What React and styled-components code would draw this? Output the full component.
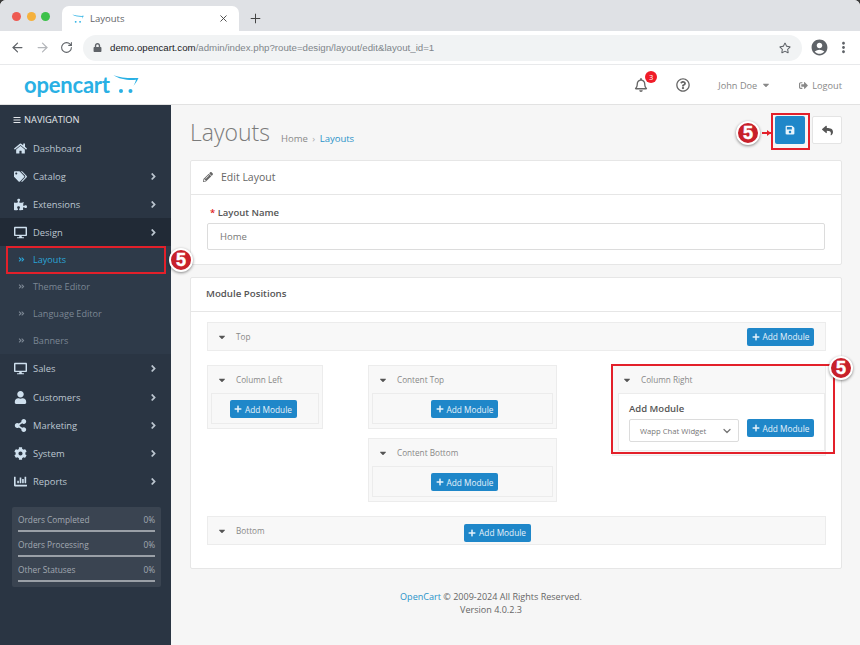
import React from "react";
import styled, { createGlobalStyle } from "styled-components";
import {
  FaAngleDoubleRight,
  FaAngleRight,
  FaBars,
  FaCaretDown,
  FaChartBar,
  FaCog,
  FaDesktop,
  FaHome,
  FaLock,
  FaPencilAlt,
  FaPlus,
  FaPuzzlePiece,
  FaRegBell,
  FaRegQuestionCircle,
  FaRegStar,
  FaReply,
  FaSave,
  FaShareAlt,
  FaSignOutAlt,
  FaTags,
  FaUser,
} from "react-icons/fa";
import { MdAccountCircle, MdMoreVert } from "react-icons/md";
import { ArrowLeft, ArrowRight, ChevronDown, Plus, RotateCw, X } from "lucide-react";

const GlobalStyle = createGlobalStyle`
  html, body {
    margin: 0;
    padding: 0;
    background: #3a3a3a;
  }
  * {
    box-sizing: border-box;
  }
`;

const Cart = ({ size = 26, color = "#29b0e4" }) => (
  <svg width={size} height={size * 0.77} viewBox="0 0 26 20" fill="none">
    <path d="M0.5 1.2C7 3.6 15 4.4 25.5 4C24 7 22.5 9.5 20.5 12C22 9 22.6 7.4 23 5.8C15 6.6 6 5 0.5 1.2Z" fill={color} />
    <circle cx="8" cy="17" r="2" fill={color} />
    <circle cx="17.5" cy="17" r="2" fill={color} />
  </svg>
);

const MENU = [
  { label: "Dashboard", icon: <FaHome /> },
  { label: "Catalog", icon: <FaTags />, more: true },
  { label: "Extensions", icon: <FaPuzzlePiece />, more: true },
  { label: "Design", icon: <FaDesktop />, more: true, open: true },
];
const SUBMENU = ["Layouts", "Theme Editor", "Language Editor", "Banners"];
const MENU_AFTER = [
  { label: "Sales", icon: <FaDesktop />, more: true },
  { label: "Customers", icon: <FaUser />, more: true },
  { label: "Marketing", icon: <FaShareAlt />, more: true },
  { label: "System", icon: <FaCog />, more: true },
  { label: "Reports", icon: <FaChartBar />, more: true },
];
const STATS = ["Orders Completed", "Orders Processing", "Other Statuses"];

const MenuRow = ({ item }) => (
  <NavRow $open={item.open}>
    <NavIcon>{item.icon}</NavIcon>
    <NavLabel>{item.label}</NavLabel>
    {item.more && <FaAngleRight size={11} />}
  </NavRow>
);

const AddButton = () => (
  <BlueButton>
    <FaPlus size={8} />
    Add Module
  </BlueButton>
);

const PositionHead = ({ children }) => (
  <PositionTitle>
    <FaCaretDown size={10} />
    <span>{children}</span>
  </PositionTitle>
);

const Column = ({ title, shift }) => (
  <ColumnBox>
    <PositionHead>{title}</PositionHead>
    <ColumnBody $shift={shift}>
      <AddButton />
    </ColumnBody>
  </ColumnBox>
);

export default function App() {
  return (
    <Window>
      <GlobalStyle />
      <TabStrip>
        <Lights>
          <Light $c="#ee5a52" />
          <Light $c="#f5b13d" />
          <Light $c="#3cc14a" />
        </Lights>
        <Tab>
          <Cart size={12} />
          <TabTitle>Layouts</TabTitle>
          <X size={11} color="#444" />
        </Tab>
        <NewTab>
          <Plus size={15} strokeWidth={1.6} />
        </NewTab>
      </TabStrip>
      <Toolbar>
        <ArrowLeft size={15} color="#5f6368" />
        <ArrowRight size={15} color="#b4b7bb" />
        <RotateCw size={13} color="#5f6368" />
        <Address>
          <FaLock size={9} color="#5f6368" />
          <Url>
            <b>demo.opencart.com</b>/admin/index.php?route=design/layout/edit&amp;layout_id=1
          </Url>
          <FaRegStar size={12} color="#5f6368" />
        </Address>
        <ToolbarEnd>
          <MdAccountCircle size={19} color="#5f6368" />
          <MdMoreVert size={17} color="#5f6368" />
        </ToolbarEnd>
      </Toolbar>

      <Header>
        <Logo>
          <LogoText>opencart</LogoText>
          <Cart size={26} />
        </Logo>
        <HeaderNav>
          <Bell>
            <FaRegBell size={14} />
            <BellCount>3</BellCount>
          </Bell>
          <FaRegQuestionCircle size={14} />
          <HeaderLink>
            John Doe <FaCaretDown size={10} />
          </HeaderLink>
          <HeaderLink>
            <FaSignOutAlt size={9} /> Logout
          </HeaderLink>
        </HeaderNav>
      </Header>

      <Main>
        <Sidebar>
          <NavTitle>
            <FaBars size={8} /> NAVIGATION
          </NavTitle>
          {MENU.map(item => (
            <MenuRow key={item.label} item={item} />
          ))}
          <SubMenu>
            {SUBMENU.map((label, i) => (
              <SubRow key={label} $active={i === 0}>
                <FaAngleDoubleRight size={7} />
                {label}
              </SubRow>
            ))}
          </SubMenu>
          <AfterMenu>
            {MENU_AFTER.map(item => (
              <MenuRow key={item.label} item={item} />
            ))}
          </AfterMenu>
          <Stats>
            {STATS.map(label => (
              <Stat key={label}>
                <StatText>
                  <span>{label}</span>
                  <span>0%</span>
                </StatText>
                <StatBar />
              </Stat>
            ))}
          </Stats>
        </Sidebar>

        <Content>
          <PageHeader>
            <PageTitle>Layouts</PageTitle>
            <Crumbs>
              Home <CrumbSep>›</CrumbSep> <CrumbLink>Layouts</CrumbLink>
            </Crumbs>
            <PageActions>
              <SaveButton>
                <FaSave size={10} />
              </SaveButton>
              <BackButton>
                <FaReply size={11} />
              </BackButton>
            </PageActions>
          </PageHeader>

          <Panel>
            <PanelHead>
              <FaPencilAlt size={10} /> Edit Layout
            </PanelHead>
            <NameBody>
              <FieldLabel>
                <em>*</em> Layout Name
              </FieldLabel>
              <TextInput>Home</TextInput>
            </NameBody>
          </Panel>

          <ModulePanel>
            <ModuleHead>Module Positions</ModuleHead>
            <ModuleBody>
              <WideBar>
                <PositionHead>Top</PositionHead>
                <AddButton />
              </WideBar>
              <Columns>
                <LeftSlot>
                  <Column title="Column Left" shift={-4} />
                </LeftSlot>
                <MiddleSlot>
                  <Column title="Content Top" shift={4} />
                  <Column title="Content Bottom" shift={4} />
                </MiddleSlot>
                <ColumnBox>
                  <PositionHead>Column Right</PositionHead>
                  <RightBody>
                    <AddTitle>Add Module</AddTitle>
                    <AddRow>
                      <SelectBox>
                        Wapp Chat Widget
                        <ChevronDown size={12} strokeWidth={2.6} />
                      </SelectBox>
                      <AddButton />
                    </AddRow>
                  </RightBody>
                </ColumnBox>
              </Columns>
              <BottomBar>
                <PositionHead>Bottom</PositionHead>
                <BottomAdd>
                  <AddButton />
                </BottomAdd>
              </BottomBar>
            </ModuleBody>
          </ModulePanel>

          <Footer>
            <div>
              <CrumbLink>OpenCart</CrumbLink> © 2009-2024 All Rights Reserved.
            </div>
            <div>Version 4.0.2.3</div>
          </Footer>
        </Content>
      </Main>

      <RedBox $x={771} $y={113} $w={39} $h={37} />
      <RedBox $x={6} $y={246} $w={160} $h={28} />
      <RedBox $x={611} $y={364} $w={224} $h={90} />
      <Arrow />
      <Badge $x={736} $y={121}>5</Badge>
      <Badge $x={169} $y={248}>5</Badge>
      <Badge $x={829} $y={356}>5</Badge>
    </Window>
  );
}

const Window = styled.div`
  position: relative;
  width: 860px;
  height: 645px;
  overflow: hidden;
  border-radius: 6px 6px 0 0;
  background: #f6f6f6;
  font-family: "Open Sans", "Liberation Sans", sans-serif;
  color: #666;
`;

const TabStrip = styled.div`
  display: flex;
  align-items: flex-end;
  height: 31px;
  padding-left: 12px;
  background: #dfe1e5;
`;

const Lights = styled.div`
  display: flex;
  gap: 5.5px;
  align-self: flex-start;
  margin-top: 12px;
  width: 50px;
`;

const Light = styled.span`
  width: 9px;
  height: 9px;
  border-radius: 50%;
  background: ${({ $c }) => $c};
`;

const Tab = styled.div`
  display: flex;
  align-items: center;
  gap: 6px;
  width: 177px;
  height: 25px;
  padding: 0 10px 0 10px;
  border-radius: 7px 7px 0 0;
  background: #fff;
`;

const TabTitle = styled.span`
  flex: 1;
  font-size: 9.5px;
  color: #5f6368;
`;

const NewTab = styled.div`
  display: flex;
  align-items: center;
  justify-content: center;
  width: 32px;
  height: 25px;
  color: #444;
`;

const Toolbar = styled.div`
  display: flex;
  align-items: center;
  gap: 10px;
  height: 34px;
  padding: 0 8px 0 10px;
  background: #fff;
  border-bottom: 1px solid #e8e9eb;
`;

const Address = styled.div`
  display: flex;
  align-items: center;
  flex: 1;
  height: 26px;
  padding: 0 11px 0 10px;
  border-radius: 13px;
  background: #f1f3f4;
`;

const ToolbarEnd = styled.div`
  display: flex;
  align-items: center;
  gap: 6px;
  margin-left: -2px;
`;

const Url = styled.div`
  flex: 1;
  margin-left: 8px;
  font-family: "Liberation Sans", Arial, sans-serif;
  font-size: 9.7px;
  color: #80868b;
  b {
    font-weight: 400;
    color: #202124;
  }
`;

const Header = styled.div`
  display: flex;
  align-items: center;
  justify-content: space-between;
  height: 40px;
  padding: 0 18px 0 24px;
  background: #fff;
  border-bottom: 1px solid #e2e2e2;
`;

const Logo = styled.div`
  display: flex;
  align-items: center;
  gap: 3px;
`;

const LogoText = styled.span`
  font-family: "Lato", "Open Sans", sans-serif;
  font-size: 22px;
  font-weight: 700;
  line-height: 24px;
  letter-spacing: -0.2px;
  color: #29b0e4;
`;

const HeaderNav = styled.div`
  display: flex;
  align-items: center;
  gap: 19px;
  font-size: 9.2px;
  color: #666;
`;

const Bell = styled.div`
  position: relative;
  display: flex;
  margin-right: 9px;
`;

const BellCount = styled.span`
  position: absolute;
  top: -7px;
  right: -9px;
  display: flex;
  align-items: center;
  justify-content: center;
  width: 12px;
  height: 12px;
  border-radius: 50%;
  background: #f01c28;
  color: #fff;
  font-size: 7.5px;
`;

const HeaderLink = styled.span`
  display: flex;
  align-items: center;
  gap: 4px;
  padding-top: 1px;
  color: #888;
  margin-left: 9px;
`;

const Main = styled.div`
  display: flex;
  height: 540px;
`;

const Sidebar = styled.div`
  width: 171px;
  flex: none;
  background: #2a3543;
  color: #c8d0d8;
`;

const NavTitle = styled.div`
  display: flex;
  align-items: center;
  gap: 3px;
  height: 29px;
  padding: 0 0 0 13px;
  font-size: 9.3px;
  color: #e4e8ec;
`;

const NavRow = styled.div`
  display: flex;
  align-items: center;
  height: 28px;
  padding: 0 12px 0 13px;
  font-size: 9.4px;
  color: #bcc6d0;
  background: ${({ $open }) => ($open ? "#212a36" : "transparent")};
`;

const NavIcon = styled.span`
  display: flex;
  justify-content: center;
  width: 14px;
  margin-right: 6px;
  font-size: 13px;
  color: #cfe0ee;
`;

const NavLabel = styled.span`
  flex: 1;
`;

const SubMenu = styled.div`
  background: #2e3a49;
`;

const SubRow = styled.div`
  display: flex;
  align-items: center;
  gap: 8px;
  height: 27px;
  padding-left: 18px;
  font-size: 9.1px;
  color: ${({ $active }) => ($active ? "#2aa5d8" : "#7c8794")};
`;

const AfterMenu = styled.div`
  & > :first-child {
    margin-bottom: 1px;
  }
`;

const Stats = styled.div`
  margin: 12px 10px 0 12px;
  padding: 4px 6px;
  height: 80px;
  border-radius: 2px;
  background: #3a4451;
`;

const Stat = styled.div`
  height: 25px;
  padding-top: 3px;
`;

const StatText = styled.div`
  display: flex;
  justify-content: space-between;
  font-size: 8.3px;
  line-height: 12px;
  color: #a2a9b1;
`;

const StatBar = styled.div`
  height: 1.5px;
  margin-top: 4px;
  background: #9aa0a7;
`;

const Content = styled.div`
  flex: 1;
  padding: 0 18px 0 19px;
`;

const PageHeader = styled.div`
  display: flex;
  align-items: center;
  height: 55px;
  padding-bottom: 1px;
`;

const PageTitle = styled.div`
  font-size: 23px;
  font-weight: 300;
  color: #7b7b7b;
`;

const Crumbs = styled.div`
  flex: 1;
  margin: 13px 0 0 11px;
  font-size: 9.5px;
  color: #8a8a8a;
`;

const CrumbSep = styled.span`
  margin: 0 2px;
  color: #aaa;
`;

const CrumbLink = styled.span`
  color: #2a93c9;
`;

const PageActions = styled.div`
  display: flex;
  gap: 7px;
  margin-bottom: 4px;
`;

const SaveButton = styled.div`
  display: flex;
  align-items: center;
  justify-content: center;
  width: 30px;
  height: 28px;
  border-radius: 2px;
  background: #1f87c9;
  color: #e8f4fc;
`;

const BackButton = styled(SaveButton)`
  border: 1px solid #e4e4e4;
  background: #fff;
  color: #555;
`;

const Panel = styled.div`
  height: 105px;
  background: #fff;
  border: 1px solid #e6e6e6;
  border-radius: 2px;
`;

const PanelHead = styled.div`
  display: flex;
  align-items: center;
  gap: 8px;
  height: 34px;
  padding: 0 0 1px 12px;
  border-bottom: 1px solid #e6e6e6;
  font-size: 10.5px;
  color: #666;
`;

const NameBody = styled.div`
  padding: 11px 16px 0 16px;
`;

const FieldLabel = styled.div`
  margin-left: 3px;
  font-size: 9.5px;
  font-weight: 600;
  line-height: 14px;
  color: #555;
  em {
    font-style: normal;
    color: #e02020;
  }
`;

const TextInput = styled.div`
  display: flex;
  align-items: center;
  height: 27px;
  margin-top: 3px;
  padding-left: 12px;
  border: 1px solid #dcdcdc;
  border-radius: 2px;
  font-size: 9.5px;
  color: #777;
`;

const ModulePanel = styled(Panel)`
  height: 292px;
  margin-top: 12px;
`;

const ModuleHead = styled.div`
  display: flex;
  align-items: center;
  height: 34px;
  padding: 0 0 2px 15px;
  border-bottom: 1px solid #e6e6e6;
  font-size: 9.7px;
  font-weight: 600;
  color: #555;
`;

const ModuleBody = styled.div`
  padding: 10px 15px 0 16px;
`;

const WideBar = styled.div`
  display: flex;
  align-items: center;
  justify-content: space-between;
  height: 29px;
  padding-right: 11px;
  border: 1px solid #ececec;
  background: #f8f8f8;
`;

const BottomBar = styled(WideBar)`
  justify-content: flex-start;
  margin-top: 14px;
`;

const BottomAdd = styled.div`
  margin-left: 199px;
`;

const PositionTitle = styled.div`
  display: flex;
  align-items: center;
  gap: 9px;
  height: 27px;
  padding-left: 9px;
  font-size: 8.2px;
  color: #888;
  svg {
    color: #555;
  }
`;

const BlueButton = styled.div`
  display: inline-flex;
  align-items: center;
  justify-content: center;
  gap: 3px;
  width: 67px;
  height: 18px;
  border-radius: 2px;
  background: #1f87c9;
  color: #e6f2fa;
  font-size: 8.3px;
`;

const Columns = styled.div`
  display: flex;
  align-items: flex-start;
  margin-top: 14px;
`;

const LeftSlot = styled.div`
  width: 116px;
  margin-right: 45px;
`;

const MiddleSlot = styled.div`
  display: flex;
  flex-direction: column;
  gap: 9px;
  width: 189px;
  margin-right: 55px;
`;

const ColumnBox = styled.div`
  flex: 1;
  padding: 0 3px 4px;
  border: 1px solid #ececec;
  background: #f8f8f8;
  ${PositionTitle} {
    margin-left: -3px;
  }
`;

const ColumnBody = styled.div`
  display: flex;
  align-items: center;
  justify-content: center;
  height: 31px;
  padding-top: 1px;
  padding-left: ${({ $shift }) => Math.max($shift, 0)}px;
  padding-right: ${({ $shift }) => Math.max(-$shift, 0)}px;
  border: 1px solid #ececec;
  background: #f8f8f8;
`;

const RightBody = styled.div`
  height: 58px;
  padding: 8px 10px 0 10px;
  margin: 0 -3px 0 2px;
  border: 1px solid #ececec;
  background: #fff;
`;

const AddTitle = styled.div`
  font-size: 9.5px;
  font-weight: 600;
  line-height: 14px;
  color: #555;
`;

const AddRow = styled.div`
  display: flex;
  justify-content: space-between;
  align-items: flex-start;
  margin-top: 3px;
`;

const SelectBox = styled.div`
  display: flex;
  align-items: center;
  justify-content: space-between;
  width: 110px;
  height: 23px;
  padding: 0 5px 0 10px;
  border: 1px solid #dcdcdc;
  border-radius: 2px;
  background: #fff;
  font-size: 7.7px;
  color: #777;
`;

const Footer = styled.div`
  margin-top: 21px;
  padding-right: 50px;
  font-size: 9.05px;
  line-height: 13px;
  text-align: center;
  color: #666;
`;

const RedBox = styled.div`
  position: absolute;
  left: ${({ $x }) => $x}px;
  top: ${({ $y }) => $y}px;
  width: ${({ $w }) => $w}px;
  height: ${({ $h }) => $h}px;
  border: 2px solid #e3202a;
`;

const Arrow = styled.div`
  position: absolute;
  left: 762px;
  top: 132px;
  width: 9px;
  height: 1.5px;
  background: #e3202a;
  &::after {
    content: "";
    position: absolute;
    right: 0;
    top: -2px;
    border-left: 4px solid #e3202a;
    border-top: 3px solid transparent;
    border-bottom: 3px solid transparent;
  }
`;

const Badge = styled.div`
  position: absolute;
  left: ${({ $x }) => $x}px;
  top: ${({ $y }) => $y}px;
  display: flex;
  align-items: center;
  justify-content: center;
  width: 24px;
  height: 24px;
  border: 2px solid #fff;
  border-radius: 50%;
  background: #c8202a;
  box-shadow: 0 1px 3px rgba(0, 0, 0, 0.45);
  color: #fff;
  font-family: "Liberation Sans", Arial, sans-serif;
  font-size: 18px;
  font-weight: 700;
  -webkit-text-stroke: 0.5px #fff;
`;
